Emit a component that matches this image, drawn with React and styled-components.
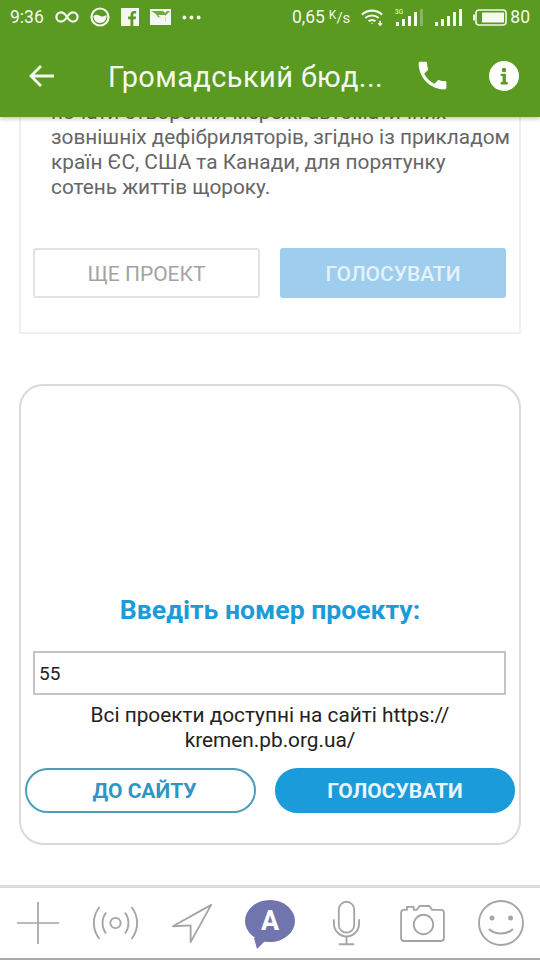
import React from "react";
import styled, { createGlobalStyle } from "styled-components";

const Global = createGlobalStyle`
  html, body { margin: 0; padding: 0; background: #fff; }
  body { font-family: Roboto, "Liberation Sans", sans-serif; }
`;

const Page = styled.div`
  width: 540px;
  height: 960px;
  display: flex;
  flex-direction: column;
  overflow: hidden;
  background: #fff;
`;

const Header = styled.header`
  height: 117px;
  flex: none;
  background: #5a9a21;
  color: #f4f8ee;
  box-shadow: 0 2px 4px rgba(0, 0, 0, 0.22);
  position: relative;
  z-index: 2;
`;

const StatusBar = styled.div`
  height: 34px;
  display: flex;
  align-items: center;
  padding: 0 10px;
  font-size: 17.5px;
`;

const StatusGroup = styled.div`
  display: flex;
  align-items: center;
  gap: 11px;
`;

const Spacer = styled.div`
  flex: 1;
`;

const Speed = styled.span`
  white-space: nowrap;
  sup {
    font-size: 12px;
    margin-left: 4px;
    vertical-align: 4px;
    line-height: 0;
  }
  small {
    font-size: 15px;
  }
`;

const BatteryLevel = styled.span`
  margin-left: -8px;
`;

const AppBar = styled.div`
  height: 83px;
  display: flex;
  align-items: center;
  padding: 0 21px 0 29px;
`;

const Title = styled.div`
  font-size: 29px;
  margin: 2px 0 0 53px;
  letter-spacing: 0.4px;
  white-space: nowrap;
`;

const AppActions = styled.div`
  margin-left: auto;
  display: flex;
  align-items: center;
  gap: 38px;
`;

const Content = styled.main`
  flex: 1;
  min-height: 0;
  overflow: hidden;
  padding: 0 19px;
`;

const InfoCard = styled.section`
  margin-top: -17px;
  height: 234px;
  box-sizing: border-box;
  border: 2px solid #f0f0f0;
  border-top: 0;
  padding-left: 30px;
  display: flex;
  flex-direction: column;
`;

const Body = styled.p`
  margin: 0;
  font-size: 20.8px;
  line-height: 25px;
  color: #666;
  white-space: nowrap;
`;

const ButtonRow = styled.div`
  display: flex;
  gap: ${(p) => p.$gap}px;
  margin: ${(p) => p.$margin};
`;

const FlatButton = styled.button`
  width: ${(p) => p.$width}px;
  height: 50px;
  box-sizing: border-box;
  border-radius: 3px;
  border: 2px solid ${(p) => (p.$primary ? "#9fcdee" : "#e2e2e2")};
  background: ${(p) => (p.$primary ? "#9fcdee" : "#fff")};
  color: ${(p) => (p.$primary ? "#e6f2fa" : "#a3a3a3")};
  font: ${(p) => (p.$primary ? 500 : 400)} 21px Roboto, sans-serif;
  padding: 2px 0 0;
`;

const VoteCard = styled.section`
  margin-top: 50px;
  height: 461px;
  box-sizing: border-box;
  border: 2px solid #d9d9de;
  border-radius: 24px;
  padding: 0 4px;
  display: flex;
  flex-direction: column;
`;

const Heading = styled.h2`
  margin: 209px 0 0;
  font-size: 26.6px;
  line-height: 30px;
  font-weight: 700;
  color: #1b9bd9;
  text-align: center;
  white-space: nowrap;
`;

const NumberBox = styled.div`
  margin: 26px 9px 0 8px;
  height: 44px;
  box-sizing: border-box;
  border: 2px solid #c4c4c4;
  display: flex;
  align-items: center;
  padding-left: 4px;
  font-size: 19px;
  color: #222;
`;

const Hint = styled.p`
  margin: 8px 0 0;
  font-size: 20.8px;
  line-height: 25px;
  color: #222;
  text-align: center;
  white-space: nowrap;
`;

const PillButton = styled.button`
  width: ${(p) => p.$width}px;
  height: 45px;
  box-sizing: border-box;
  border-radius: 23px;
  border: 2px solid ${(p) => (p.$primary ? "#1b9bd9" : "#4b9dbb")};
  background: ${(p) => (p.$primary ? "#1b9bd9" : "#fff")};
  color: ${(p) => (p.$primary ? "#eaf5fb" : "#2f95c4")};
  font: 700 21px Roboto, sans-serif;
  padding: 1px 0 0 ${(p) => (p.$primary ? 0 : 8)}px;
`;

const Composer = styled.footer`
  height: 75px;
  flex: none;
  box-sizing: border-box;
  border-top: 3px solid #dcdcdc;
  border-bottom: 2px solid #aaa;
  display: flex;
  align-items: center;
  padding: 0 0 0 16px;
  background: #fff;
`;

const Tool = styled.div`
  flex: none;
  display: flex;
  margin-left: ${(p) => p.$left || 0}px;
`;

const Avatar = styled.div`
  position: relative;
  width: 50px;
  height: 42px;
  border-radius: 50%;
  background: #7175ad;
  color: #fff;
  font-size: 27px;
  font-weight: 700;
  display: flex;
  align-items: center;
  justify-content: center;
  margin-bottom: 4px;
  &::after {
    content: "";
    position: absolute;
    left: 9px;
    bottom: -7px;
    width: 0;
    height: 0;
    border-left: 3px solid transparent;
    border-right: 11px solid transparent;
    border-top: 11px solid #7175ad;
  }
`;

const InfinityIcon = () => (
  <svg width="24" height="14" viewBox="0 0 26 14" fill="none" stroke="#f4f8ee" strokeWidth="2.4">
    <path d="M13 7C10.5 3 8.500 2 6.500 2a5 5 0 0 0 0 10c2 0 4-1 6.500-5s4.500-5 6.500-5a5 5 0 0 1 0 10c-2 0-4-1-6.500-5z" />
  </svg>
);

const CircleAppIcon = () => (
  <svg width="20" height="20" viewBox="0 0 20 20">
    <circle cx="10" cy="10" r="8.500" fill="none" stroke="#f4f8ee" strokeWidth="2.2" />
    <path d="M3.500 9c3-2.500 5-1 7 0s4 .5 6-1c.5 4.500-2.500 8-6.500 8S3.500 13 3.500 9z" fill="#f4f8ee" />
  </svg>
);

const FacebookIcon = () => (
  <svg width="18" height="18" viewBox="0 0 19 19">
    <path fillRule="evenodd" fill="#f4f8ee" d="M0 0h19v19h-6v-7h2.500l.4-3H13V7.300c0-.9.300-1.400 1.400-1.400H16V3.200c-.4 0-1.200-.1-2.200-.1-2.200 0-3.700 1.300-3.700 3.800V9H7.500v3H10v7H0z" />
  </svg>
);

const MailImageIcon = () => (
  <svg width="21" height="16" viewBox="0 0 21 16">
    <rect width="21" height="16" fill="#f4f8ee" />
    <path d="M1 2h12l2 2 2-2h3l-5 5 1 6-3-4-5-1-2-3z" fill="#5a9a21" opacity=".85" />
    <path d="M8 6h7v3l1 4-3-3-2-1z" fill="#f4f8ee" />
  </svg>
);

const DotsIcon = () => (
  <svg width="19" height="5" viewBox="0 0 20 5" fill="#f4f8ee">
    <circle cx="2.500" cy="2.500" r="2" />
    <circle cx="10" cy="2.500" r="2" />
    <circle cx="17.500" cy="2.500" r="2" />
  </svg>
);

const WifiIcon = () => (
  <svg width="23" height="19" viewBox="0 0 24 19" fill="none" stroke="#f4f8ee" strokeWidth="2.200">
    <path d="M1 6.500c6-5.500 15-5.500 21 0" />
    <path d="M4.500 10c4-3.500 10-3.500 14 0" />
    <path d="M8 13.500c2-1.800 5-1.800 7 0" />
    <path d="M11.500 15v1M20 13v4M18 15.500l2 2 2-2" strokeWidth="1.600" />
  </svg>
);

const Signal = ({ label, dim }) => (
  <svg width="28" height="19" viewBox="0 0 28 19" fill="#f4f8ee">
    {label && (
      <text x="0" y="6" fontSize="6.500" fontFamily="Roboto, sans-serif">
        3G
      </text>
    )}
    <rect x="1" y="14" width="3" height="4" />
    <rect x="7" y="11" width="3" height="7" />
    <rect x="13" y="8" width="3" height="10" />
    <rect x="19" y="4" width="3" height="14" />
    <rect x="25" y="1" width="3" height="17" opacity={dim ? 0.3 : 1} />
  </svg>
);

const BatteryIcon = () => (
  <svg width="34" height="17" viewBox="0 0 34 17">
    <path d="M0 5.500h2v6H0z" fill="#f4f8ee" />
    <rect x="3" y="1" width="30" height="15" rx="3" fill="none" stroke="#f4f8ee" strokeWidth="1.600" />
    <rect x="9" y="3.500" width="22" height="10" fill="#f4f8ee" />
  </svg>
);

const BackIcon = () => (
  <svg width="26" height="24" viewBox="0 0 26 24" fill="none" stroke="#f4f8ee" strokeWidth="2.800">
    <path d="M25 12H2M12 2 2 12l10 10" />
  </svg>
);

const PhoneIcon = () => (
  <svg width="37" height="37" viewBox="0 0 24 24" fill="#fff">
    <path d="M6.600 10.800c1.400 2.800 3.800 5.100 6.600 6.600l2.200-2.200c.3-.3.700-.4 1-.2 1.100.4 2.300.6 3.600.6.600 0 1 .4 1 1V20c0 .6-.4 1-1 1C10.600 21 3 13.400 3 4c0-.6.400-1 1-1h3.500c.6 0 1 .4 1 1 0 1.300.2 2.500.6 3.600.1.300 0 .7-.2 1z" />
  </svg>
);

const InfoIcon = () => (
  <svg width="30" height="30" viewBox="0 0 32 32">
    <circle cx="16" cy="16" r="16" fill="#fff" />
    <circle cx="16" cy="9.500" r="2.400" fill="#5a9a21" />
    <path d="M12.500 13.500h5.500v9h2v2.500h-7.500v-2.500h2v-6.500h-2z" fill="#5a9a21" />
  </svg>
);

const PlusIcon = () => (
  <svg width="44" height="44" viewBox="0 0 46 46" stroke="#a5a5a5" strokeWidth="1.800">
    <path d="M23 1v44M1 23h44" />
  </svg>
);

const BroadcastIcon = () => (
  <svg width="47" height="34" viewBox="0 0 50 36" fill="none" stroke="#a5a5a5" strokeWidth="2">
    <circle cx="25" cy="18" r="5.500" />
    <path d="M15 7c-5 6-5 16 0 22M35 7c5 6 5 16 0 22M8 1c-8 10-8 24 0 34M42 1c8 10 8 24 0 34" />
  </svg>
);

const SendIcon = () => (
  <svg width="41" height="41" viewBox="0 0 44 44" fill="none" stroke="#a5a5a5" strokeWidth="2" strokeLinejoin="round">
    <path d="M42 2 1 25l19-1 0 18z" />
  </svg>
);

const MicIcon = () => (
  <svg width="27" height="46" viewBox="0 0 28 46" fill="none" stroke="#a5a5a5" strokeWidth="1.900">
    <rect x="6" y="1" width="16" height="32" rx="8" />
    <path d="M1 19v5c0 7 6 13 13 13s13-6 13-13v-5M14 37v7M6 45h16" />
  </svg>
);

const CameraIcon = () => (
  <svg width="47" height="37" viewBox="0 0 48 38" fill="none" stroke="#a5a5a5" strokeWidth="1.900" strokeLinejoin="round">
    <path d="M1 8q0-3 3-3h3V2h7v3h3l3-4h10l3 4h9q3 0 3 3v26q0 3-3 3H4q-3 0-3-3z" />
    <circle cx="24" cy="20" r="10" />
  </svg>
);

const SmileIcon = () => (
  <svg width="46" height="46" viewBox="0 0 46 46" fill="none" stroke="#a5a5a5" strokeWidth="1.900">
    <circle cx="23" cy="23" r="22" />
    <circle cx="14" cy="18" r="2.500" fill="#a5a5a5" stroke="none" />
    <circle cx="32.500" cy="18" r="2.500" fill="#a5a5a5" stroke="none" />
    <path d="M11 29c6 6 18 6 24 0" strokeWidth="2.200" />
  </svg>
);

export default function App() {
  return (
    <Page>
      <Global />
      <Header>
        <StatusBar>
          <StatusGroup>
            <span>9:36</span>
            <InfinityIcon />
            <CircleAppIcon />
            <FacebookIcon />
            <MailImageIcon />
            <DotsIcon />
          </StatusGroup>
          <Spacer />
          <StatusGroup>
            <Speed>
              0,65<sup>K</sup>
              <small>/s</small>
            </Speed>
            <WifiIcon />
            <Signal label dim />
            <Signal />
            <BatteryIcon />
            <BatteryLevel>80</BatteryLevel>
          </StatusGroup>
        </StatusBar>
        <AppBar>
          <BackIcon />
          <Title>Громадський бюд...</Title>
          <AppActions>
            <PhoneIcon />
            <InfoIcon />
          </AppActions>
        </AppBar>
      </Header>
      <Content>
        <InfoCard>
          <Body>
            почати створення мережі автоматичних
            <br />
            зовнішніх дефібриляторів, згідно із прикладом
            <br />
            країн ЄС, США та Канади, для порятунку
            <br />
            сотень життів щороку.
          </Body>
          <ButtonRow $gap={20} $margin="48px 0 0 -18px">
            <FlatButton $width={227}>ЩЕ ПРОЕКТ</FlatButton>
            <FlatButton $width={226} $primary>
              ГОЛОСУВАТИ
            </FlatButton>
          </ButtonRow>
        </InfoCard>
        <VoteCard>
          <Heading>Введіть номер проекту:</Heading>
          <NumberBox>55</NumberBox>
          <Hint>
            Всі проекти доступні на сайті https://
            <br />
            kremen.pb.org.ua/
          </Hint>
          <ButtonRow $gap={19} $margin="15px 0 0">
            <PillButton $width={231}>ДО САЙТУ</PillButton>
            <PillButton $width={240} $primary>
              ГОЛОСУВАТИ
            </PillButton>
          </ButtonRow>
        </VoteCard>
      </Content>
      <Composer>
        <Tool><PlusIcon /></Tool>
        <Tool $left={32}><BroadcastIcon /></Tool>
        <Tool $left={33}><SendIcon /></Tool>
        <Tool $left={32}><Avatar>A</Avatar></Tool>
        <Tool $left={38}><MicIcon /></Tool>
        <Tool $left={40}><CameraIcon /></Tool>
        <Tool $left={31}><SmileIcon /></Tool>
      </Composer>
    </Page>
  );
}
